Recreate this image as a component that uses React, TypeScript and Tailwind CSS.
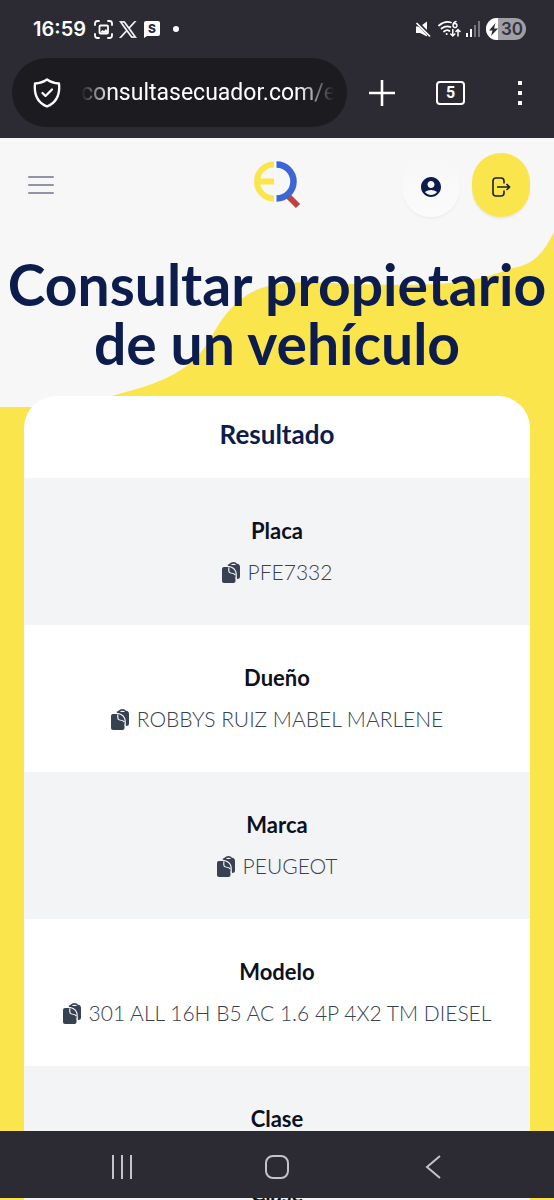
import { MdAccountCircle } from "react-icons/md";

type Dato = {
  label: string;
  valor?: string;
};

const datos: Dato[] = [
  { label: "Placa", valor: "PFE7332" },
  { label: "Dueño", valor: "ROBBYS RUIZ MABEL MARLENE" },
  { label: "Marca", valor: "PEUGEOT" },
  { label: "Modelo", valor: "301 ALL 16H B5 AC 1.6 4P 4X2 TM DIESEL" },
  { label: "Clase" },
];

function StatusBar() {
  return (
    <div className="flex h-[58px] items-center pl-[33px] pr-7 font-['Inter',sans-serif] text-white">
      <span className="text-xl font-semibold">16:59</span>

      <svg className="ml-2 size-[19px]" viewBox="0 0 19 19" fill="none" stroke="currentColor" strokeWidth="1.8" strokeLinecap="round">
        <path d="M1 5V3.500Q1 1 3.500 1H5M14 1h1.500Q18 1 18 3.500V5M18 14v1.500Q18 18 15.500 18H14M5 18H3.500Q1 18 1 15.500V14" />
        <rect x="5.500" y="5.500" width="8.500" height="8" rx="1" />
        <path d="M6 12.500l2.500-2.500 1.500 1 2-2 2 3v1z" fill="currentColor" stroke="none" />
      </svg>

      <svg className="ml-[6px] h-[17px] w-[18px]" viewBox="0 0 24 22" fill="currentColor" stroke="currentColor" strokeWidth=".7">
        <path d="M14.300 9.300 22.800 0h-2.200l-7.300 8.100L7.400 0H.6l8.800 12.300L.6 22h2.200l7.600-8.300L16.600 22h6.800zM3.700 1.600H6.600L20.300 20.400H17.400z" fillRule="evenodd" />
      </svg>

      <svg className="ml-[7px] h-[17px] w-4" viewBox="0 0 16 17">
        <path d="M2 0h12q2 0 2 2v11q0 2-2 2H3l-3 2V2q0-2 2-2z" fill="#fff" />
        <text x="8" y="12" textAnchor="middle" fontSize="12" fontWeight="800" fill="#2c2a33">S</text>
      </svg>

      <span className="ml-[13px] size-[6px] rounded-full bg-white" />

      <div className="ml-auto flex items-center">
        <svg className="h-[17px] w-4" viewBox="0 0 16 17">
          <path d="M1 5.500h4L12 .500v15L5 12H1z" fill="#fff" />
          <path d="M1 .500 15.500 15" stroke="#2c2a33" strokeWidth="3.500" />
          <path d="M1.500 2 15 15.500" stroke="#fff" strokeWidth="1.700" />
        </svg>

        <svg className="ml-[7px] h-[18px] w-[23px]" viewBox="0 0 23 18" fill="none" stroke="#fff" strokeWidth="1.700" strokeLinecap="round">
          <path d="M1 5.500Q7 .500 13 2.500M3.500 8.500Q8 5 12.500 7M6 11.500q3-2.500 5.500-.500" />
          <circle cx="8.700" cy="14" r="1" fill="#fff" stroke="none" />
          <path d="M18 1.500q-3 .800-3 4a2 2 0 1 0 .300-1" strokeWidth="1.500" />
          <path d="M14.800 9.500V16m-2-2 2 2 2-2M20 16V9.500m-2 2 2-2 2 2" strokeWidth="1.500" />
        </svg>

        <svg className="ml-1 h-4 w-[15px]" viewBox="0 0 15 16">
          <path d="M1 12h2v4H1zM5 8h2v8H5z" fill="#fff" />
          <path d="M9 4h2v12H9zM13 0h2v16h-2z" fill="#77757d" />
        </svg>

        <div className="ml-[6px] flex h-[22px] w-10 items-center overflow-hidden rounded-full bg-[#a09fa5]">
          <span className="flex h-full w-3 items-center justify-end bg-white">
            <svg className="h-[13px] w-[9px]" viewBox="0 0 9 13">
              <path d="M6.500 0 0 7.500h3.500L2 13l7-7.500H5z" fill="#2c2a33" />
            </svg>
          </span>
          <span className="ml-[3px] text-[17px] leading-none font-semibold text-[#34323b]">30</span>
        </div>
      </div>
    </div>
  );
}

function AddressBar() {
  return (
    <div className="flex items-center pb-[11px]">
      <div className="ml-3 flex h-[69px] flex-1 items-center rounded-full bg-[#1c1b20] pl-[21px] pr-[13px]">
        <svg className="h-[30px] w-7 shrink-0" viewBox="0 0 28 30" fill="none" stroke="#fff" strokeWidth="2.300" strokeLinecap="round" strokeLinejoin="round">
          <path d="M14 1.500Q19 5 26 5.500C27 15 25 24 14 28.500 3 24 1 15 2 5.500 9 5 14 1.500 14 1.500z" />
          <path d="m9.500 15 3 3 6.500-6.500" />
        </svg>
        <input
          type="text"
          aria-label="Dirección"
          defaultValue="consultasecuador.com/e"
          className="ml-5 w-full min-w-0 bg-transparent mask-[linear-gradient(to_right,transparent,black_12%,black_86%,transparent)] pt-px font-['Roboto',sans-serif] text-[23px] text-white outline-none"
        />
      </div>

      <button aria-label="Nueva pestaña" className="ml-[22px]">
        <svg className="size-[26px]" viewBox="0 0 26 26" stroke="#fff" strokeWidth="2.600">
          <path d="M13 0v26M0 13h26" />
        </svg>
      </button>
      <button
        aria-label="Pestañas abiertas"
        className="ml-[41px] flex h-6 w-[29px] items-center justify-center rounded-sm border-2 border-white font-['Roboto',sans-serif] text-base leading-none font-bold text-white"
      >
        5
      </button>
      <button aria-label="Menú del navegador" className="mr-8 ml-[53px] flex flex-col gap-[6px]">
        <span className="size-1 bg-white" />
        <span className="size-1 bg-white" />
        <span className="size-1 bg-white" />
      </button>
    </div>
  );
}

function Logo() {
  return (
    <svg className="h-12 w-[47px]" viewBox="0 0 47 48" fill="none">
      <path d="M33 34 44 45" stroke="#b94440" strokeWidth="6" />
      <path d="M20 3.500a17 17 0 0 0 0 34M3 20.500h17" stroke="#fbe54d" strokeWidth="6" />
      <path d="M22.500 3.500a17 17 0 1 1 0 34" stroke="#3b67d6" strokeWidth="6.500" />
    </svg>
  );
}

function CopyIcon() {
  return (
    <svg className="h-[21px] w-[18px]" viewBox="0 0 18 21">
      {/* clipboard behind */}
      <path d="M5.500 3 7.500 1.800Q9 0 11.500 0t3.500 1.800Q18 2 18 5v9.500q0 2.500-3 2.500z" fill="#374151" />
      <path d="M9 3q.500-1.300 2.500-1.300T14 3z" fill="#f3f4f6" />
      {/* sheet in front with its folded corner */}
      <path d="M2 5h4q5 .500 7.500 4.500V19q0 2-2 2H2q-2 0-2-2V7q0-2 2-2z" fill="#374151" />
      <path d="M5.500 4.400q6 .300 8 4.600 1 2 .700 8" fill="none" stroke="#f3f4f6" strokeWidth="1.200" />
      <path d="M6.800 5.500v3.300q0 2 2 2.200 3.200.200 4.700 2" fill="none" stroke="#f3f4f6" strokeWidth="1.200" />
    </svg>
  );
}

function Header() {
  return (
    <header className="grid grid-cols-[1fr_auto_1fr] items-center px-6 pt-[15px]">
      <button aria-label="Abrir menú" className="ml-1 flex w-[26px] flex-col gap-[6px]">
        <span className="h-[2px] rounded-full bg-[#9294a5]" />
        <span className="h-[2px] rounded-full bg-[#9294a5]" />
        <span className="h-[2px] rounded-full bg-[#9294a5]" />
      </button>
      <a href="#" aria-label="Inicio">
        <Logo />
      </a>
      <div className="flex justify-end gap-3">
        <button aria-label="Mi cuenta" className="flex h-16 w-[58px] items-center justify-center rounded-full bg-linear-to-b from-[#f7f7f8] to-[#fbfbfb] pt-1 shadow-[0_2px_2px_rgba(0,0,0,0.04)]">
          <MdAccountCircle className="size-6 text-[#0b1c4d]" />
        </button>
        <button aria-label="Cerrar sesión" className="flex h-16 w-[58px] items-center justify-center rounded-full bg-[#fbe54d] pt-1 shadow-[0_2px_2px_rgba(0,0,0,0.06)]">
          <svg className="h-5 w-[19px]" viewBox="0 0 19 20" fill="none" stroke="#1b2130" strokeWidth="1.600">
            <path d="M12 6.500V4q0-3-3-3H4Q1 1 1 4v12q0 3 3 3h5q3 0 3-3v-2.500M5 10h12.500M14.500 7l3 3-3 3" />
          </svg>
        </button>
      </div>
    </header>
  );
}

function Resultado() {
  return (
    <section className="mx-6 mt-[23px] overflow-hidden rounded-t-[32px] bg-white">
      <h2 className="pt-5 pb-[26px] text-center text-[26px] leading-9 font-bold text-[#0b1c4d]">Resultado</h2>
      <dl>
        {datos.map((dato) => (
          <div key={dato.label} className="flex h-[147px] flex-col items-center pt-[39px] odd:bg-[#f3f4f6]">
            <dt className="text-[22px] leading-7 font-bold text-[#0c1120]">{dato.label}</dt>
            {dato.valor && (
              <dd className="mt-[13px] flex items-center gap-2 text-[21px] leading-7 font-light whitespace-nowrap text-[#374151]">
                <button aria-label={`Copiar ${dato.label}`}>
                  <CopyIcon />
                </button>
                {dato.valor}
              </dd>
            )}
          </div>
        ))}
      </dl>
    </section>
  );
}

function NavBar() {
  return (
    <nav className="grid h-[67px] shrink-0 grid-cols-[1fr_auto_1fr] items-center bg-[#2c2a33] pt-1 text-[#c4c3c8]">
      <button aria-label="Recientes" className="mr-[22px] justify-self-center">
        <svg className="h-6 w-[22px]" viewBox="0 0 22 24" stroke="currentColor" strokeWidth="2">
          <path d="M2 0v24M11 0v24M20 0v24" />
        </svg>
      </button>
      <button aria-label="Inicio del teléfono">
        <svg className="size-6" viewBox="0 0 24 24" fill="none" stroke="currentColor" strokeWidth="2">
          <rect x="1" y="1" width="22" height="22" rx="7" />
        </svg>
      </button>
      <button aria-label="Atrás" className="ml-[22px] justify-self-center">
        <svg className="h-6 w-4" viewBox="0 0 16 24" fill="none" stroke="currentColor" strokeWidth="2">
          <path d="M15 1 2 12l13 11" />
        </svg>
      </button>
    </nav>
  );
}

export default function App() {
  return (
    <div className="flex h-screen flex-col overflow-hidden bg-[#fbe54d] font-['Lato',sans-serif]">
      <div className="shrink-0 bg-[#2c2a33]">
        <StatusBar />
        <AddressBar />
      </div>

      <main className="relative min-h-0 flex-1 overflow-hidden">
        <svg className="absolute inset-x-0 top-0 w-full" viewBox="0 0 554 269" fill="#f7f7f8">
          <path d="M0 0H554V94C544 114 534 127 512 130C462 150 420 147 350 146C290 142 262 144 240 162C214 184 214 203 193 223C168 244 140 250 112 258L80 269H0z" />
        </svg>
        <div className="relative">
          <Header />
          <h1 className="mt-[38px] text-center text-[57px] leading-[59px] font-bold text-[#0b1c4d]">
            Consultar propietario
            <br />
            de un vehículo
          </h1>
          <Resultado />
        </div>
      </main>

      <NavBar />
      {/* the page shows through under the navigation bar */}
      <div aria-hidden="true" className="mx-6 flex h-[2px] shrink-0 items-end justify-center overflow-hidden bg-[#f3f4f6] text-[22px] leading-[13px] font-bold text-[#0c1120]">
        Clase
      </div>
    </div>
  );
}
